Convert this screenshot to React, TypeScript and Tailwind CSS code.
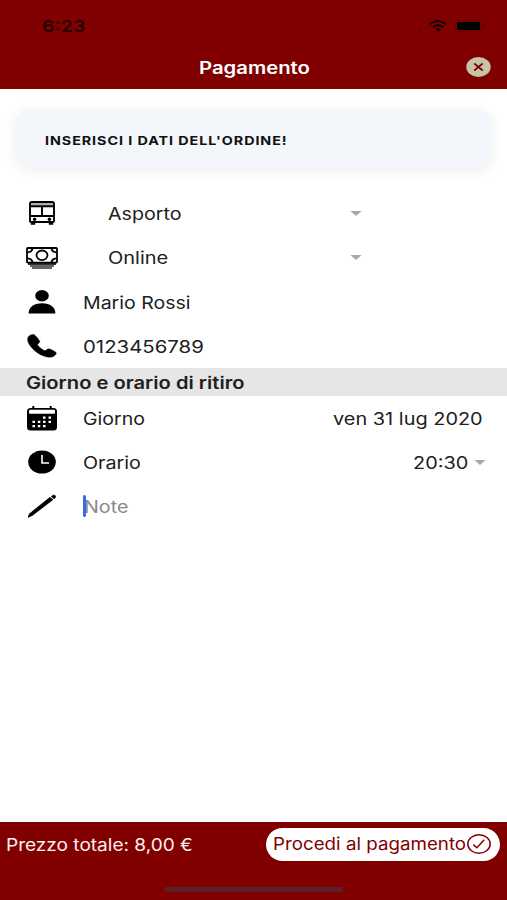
import { useLayoutEffect, useRef, type ReactNode } from "react";
import clsx from "clsx";

// Text widened horizontally so that it fills the given width.
function WideText({ width, className, children }: { width: number; className?: string; children: ReactNode }) {
    const ref = useRef<HTMLSpanElement>(null);

    useLayoutEffect(() => {
        const el = ref.current;
        if (!el) return;
        const fit = () => {
            el.style.transform = `scaleX(${width / el.offsetWidth})`;
        };
        fit();
        document.fonts.ready.then(fit);
    }, [width]);

    return (
        <span className="block shrink-0 pt-0.5 text-left" style={{ width }}>
            <span ref={ref} className={clsx("inline-block origin-left whitespace-nowrap", className)}>
                {children}
            </span>
        </span>
    );
}

function BusIcon() {
    return (
        <svg className="mb-0.5 h-6 w-[26px]" viewBox="0 0 26 24" fill="none" stroke="#000" strokeWidth="1.9">
            <path d="M3 1h20q2 0 2 2v17q0 1-1 1H2q-1 0-1-1V3q0-2 2-2Z" />
            <path d="M2 2h22v2.5H2z" fill="#aeb0ae" stroke="none" />
            <path d="M1.500 5.200h23M1.500 15h23M13 5v10" />
            <path d="M1.800 21.300h4.400v2.500H1.800zM19.800 21.300h4.400v2.500h-4.400z" fill="#000" stroke="none" />
            <circle cx="5.600" cy="18.200" r="1.700" fill="#000" stroke="none" />
            <circle cx="20.400" cy="18.200" r="1.700" fill="#000" stroke="none" />
        </svg>
    );
}

function CashIcon() {
    return (
        <svg className="mb-px h-[22px] w-8" viewBox="0 0 32 22" fill="none" stroke="#000" strokeWidth="1.8">
            <path d="M2 16h28v2H2zM4 18.300h24v1.500H4zM6 20.200h20v1.500H6z" fill="#333" stroke="none" />
            <rect x="1" y="1" width="30" height="14.600" rx="0.800" fill="#fff" />
            <ellipse cx="16" cy="8.300" rx="5.500" ry="4.800" />
            <path d="M1.500 5.300Q6 5 6.500 1.300M25.500 1.300Q26 5 30.500 5.300M1.500 11.300Q6 11.600 6.500 15.300M25.500 15.300Q26 11.600 30.500 11.300" />
        </svg>
    );
}

function PersonIcon() {
    return (
        <svg className="mb-px h-6 w-7" viewBox="0 0 28 24">
            <ellipse cx="14" cy="5.700" rx="6.800" ry="5.700" />
            <path d="M.6 23.600C.5 17 6 13.300 14 13.300S27.500 17 27.400 23.600Z" />
        </svg>
    );
}

function PhoneIcon() {
    return (
        <svg className="mb-px h-6 w-[30px]" viewBox="0 0 30 24">
            <path
                d="M4.500.8C3 1 .7 2.700.6 5c-.1 5 5.100 10.300 10.100 14 4.500 3 9.800 4.600 13.800 4.100 2.500-.4 4.600-2.300 4.800-4 .1-1-6.300-4.300-7.600-4.300-1.400 0-2.700 1.900-3.700 1.900-1.500 0-7.200-4.500-7.400-5.900-.1-1 2.300-2 2.200-3.200C12.600 6.400 8 .5 6.600.5Z"
                stroke="#000"
                strokeWidth="0.500"
            />
        </svg>
    );
}

function CalendarIcon() {
    return (
        <svg className="h-[25px] w-[30px]" viewBox="0 0 30 25">
            <rect x="0" y="2" width="30" height="22.500" rx="3.500" />
            <path d="M5.300 0h2v4h-2zM22.700 0h2v4h-2z" />
            <rect x="2" y="3.800" width="26" height="4" rx="1" fill="#fff" />
            <path
                d="M16 10.500h2.500v2.300H16zM21.500 10.500H24v2.300h-2.500zM5.500 14.700H8V17H5.500zM10.800 14.700h2.500V17h-2.500zM16 14.700h2.500V17H16zM21.500 14.700H24V17h-2.500zM5.500 18.900H8v2.300H5.500zM10.800 18.900h2.500v2.300h-2.500zM16 18.900h2.500v2.300H16z"
                fill="#fff"
            />
        </svg>
    );
}

function ClockIcon() {
    return (
        <svg className="h-6 w-7" viewBox="0 0 28 24">
            <ellipse cx="14" cy="12" rx="13.800" ry="11.600" />
            <path d="M14 5v8h7" fill="none" stroke="#fff" strokeWidth="1.600" />
        </svg>
    );
}

function PencilIcon() {
    return (
        <svg className="h-6 w-7" viewBox="0 0 28 24">
            <path d="m22 3.700 2.300 2.100L4 21.300.5 23l1-2.900Z" stroke="#000" strokeWidth="1.200" strokeLinejoin="round" />
            <path d="M23.200 2.500 24.500 1.400q1.500-1 2.700.1t.1 2.300l-1.400 1.100Z" stroke="#000" strokeWidth="0.400" />
        </svg>
    );
}

function Caret({ className }: { className?: string }) {
    return (
        <svg className={clsx("h-[5px] w-3 shrink-0", className)} viewBox="0 0 12 5">
            <path d="M.3 0h11.400L6 5Z" fill="#a9a9a9" />
        </svg>
    );
}

function Row({ icon, children }: { icon: ReactNode; children: ReactNode }) {
    return (
        <div className="flex h-11 items-center pl-[26px]">
            <div className="flex w-8 shrink-0 justify-center">{icon}</div>
            {children}
        </div>
    );
}

function SelectField({ children }: { children: ReactNode }) {
    return (
        <div className="flex w-[304px] items-center justify-between pb-0.5 pl-[50px]">
            {children}
            <Caret />
        </div>
    );
}

export default function App() {
    return (
        <div className="flex h-[900px] w-[507px] flex-col overflow-hidden bg-white font-['Inter',sans-serif] text-[17px] leading-6 text-[#202020]">
            <header className="h-[89px] shrink-0 bg-[#800000]">
                <div className="flex h-[52px] items-center justify-between pr-[22px] pl-[42px]">
                    <div className="-mt-0.5">
                        <WideText width={44} className="text-[16.500px] font-semibold text-[#260000]">6:23</WideText>
                    </div>
                    <div className="flex items-center">
                        <div className="mt-2 mr-[7px] flex gap-[3px]">
                            <i className="h-[2px] w-1 rounded-full bg-[#6c0000]" />
                            <i className="h-[2px] w-1 rounded-full bg-[#6c0000]" />
                            <i className="h-[2px] w-1 rounded-full bg-[#6c0000]" />
                            <i className="h-[2px] w-1 rounded-full bg-[#6c0000]" />
                        </div>
                        <svg className="h-3 w-[18px]" viewBox="0 0 18 12" fill="none" stroke="#160000" strokeWidth="2">
                            <path d="M.7 4.200Q9-2.200 17.300 4.200M3.800 7.200q5.200-4 10.400 0" />
                            <path d="M6.400 9.300q2.600-1.900 5.200 0L9 11.800Z" fill="#160000" stroke="none" />
                        </svg>
                        <div className="ml-2 h-3 w-[27px] rounded-[3px] border border-[#6a0000] p-px">
                            <div className="h-full rounded-[1px] bg-black" />
                        </div>
                        <i className="ml-px h-1 w-[2px] rounded-r bg-[#5a0000]" />
                    </div>
                </div>
                <div className="flex h-[30px] items-center pr-4 pl-[199px]">
                    <WideText width={111} className="font-semibold text-white">Pagamento</WideText>
                    <button className="ml-auto block" aria-label="Chiudi">
                        <svg className="h-5 w-[25px]" viewBox="0 0 25 20">
                            <ellipse cx="12.500" cy="10" rx="12.200" ry="10" fill="#c5c4a7" />
                            <path d="m8.300 6.500 8.400 7M16.700 6.500l-8.400 7" stroke="#800000" strokeWidth="1.700" />
                        </svg>
                    </button>
                </div>
            </header>

            <main className="flex-1">
                <div className="mx-4 mt-[20px] mb-[25px] flex h-[58px] items-center rounded-[14px] bg-[#f3f6fa] pt-0.5 pl-[29px] shadow-[0_3px_14px_rgba(0,0,0,0.08)]">
                    <WideText width={243} className="text-[12px] leading-6 font-bold tracking-[0.8px] text-[#111]">
                        INSERISCI I DATI DELL'ORDINE!
                    </WideText>
                </div>

                <Row icon={<BusIcon />}>
                    <SelectField>
                        <WideText width={74}>Asporto</WideText>
                    </SelectField>
                </Row>
                <Row icon={<CashIcon />}>
                    <SelectField>
                        <WideText width={60}>Online</WideText>
                    </SelectField>
                </Row>
                <Row icon={<PersonIcon />}>
                    <div className="pl-[25px]">
                        <WideText width={108}>Mario Rossi</WideText>
                    </div>
                </Row>
                <Row icon={<PhoneIcon />}>
                    <div className="pl-[25px]">
                        <WideText width={121}>0123456789</WideText>
                    </div>
                </Row>

                <div className="flex h-7 items-center bg-[#e6e6e6] pl-[26px]">
                    <WideText width={218} className="font-semibold">Giorno e orario di ritiro</WideText>
                </div>

                <Row icon={<CalendarIcon />}>
                    <div className="flex flex-1 justify-between pr-6 pl-[25px]">
                        <WideText width={62}>Giorno</WideText>
                        <WideText width={150}>ven 31 lug 2020</WideText>
                    </div>
                </Row>
                <Row icon={<ClockIcon />}>
                    <div className="flex flex-1 items-center pr-[21px] pl-[25px]">
                        <WideText width={58}>Orario</WideText>
                        <div className="ml-auto flex items-center gap-[6px]">
                            <WideText width={55}>20:30</WideText>
                            <Caret />
                        </div>
                    </div>
                </Row>
                <Row icon={<PencilIcon />}>
                    <div className="flex items-center pl-[25px]">
                        <i className="z-10 -mr-[2px] h-[22px] w-[3px] rounded-full bg-[#3f69e4]" />
                        <WideText width={44} className="text-[#898989]">Note</WideText>
                    </div>
                </Row>
            </main>

            <footer className="flex h-[78px] shrink-0 flex-col items-center bg-[#800000]">
                <div className="flex h-11 w-full items-center justify-between pr-[7px] pl-[6px]">
                    <WideText width={187} className="text-[#fff0ee]">Prezzo totale: 8,00 €</WideText>
                    <button className="flex h-[33px] w-[234px] items-center rounded-full bg-white pl-[7px] text-[#800000]">
                        <div className="-mt-0.5">
                            <WideText width={193}>Procedi al pagamento</WideText>
                        </div>
                        <svg className="ml-px h-5 w-6" viewBox="0 0 24 20" fill="none" stroke="#800000" strokeWidth="1.500">
                            <ellipse cx="12" cy="10" rx="11.200" ry="9.200" />
                            <path d="m6.300 10.600 3.600 3.200 7.300-8" />
                        </svg>
                    </button>
                </div>
                <div className="mt-[21px] h-[5px] w-[179px] rounded-full bg-[#5d2027]" />
            </footer>
        </div>
    );
}
